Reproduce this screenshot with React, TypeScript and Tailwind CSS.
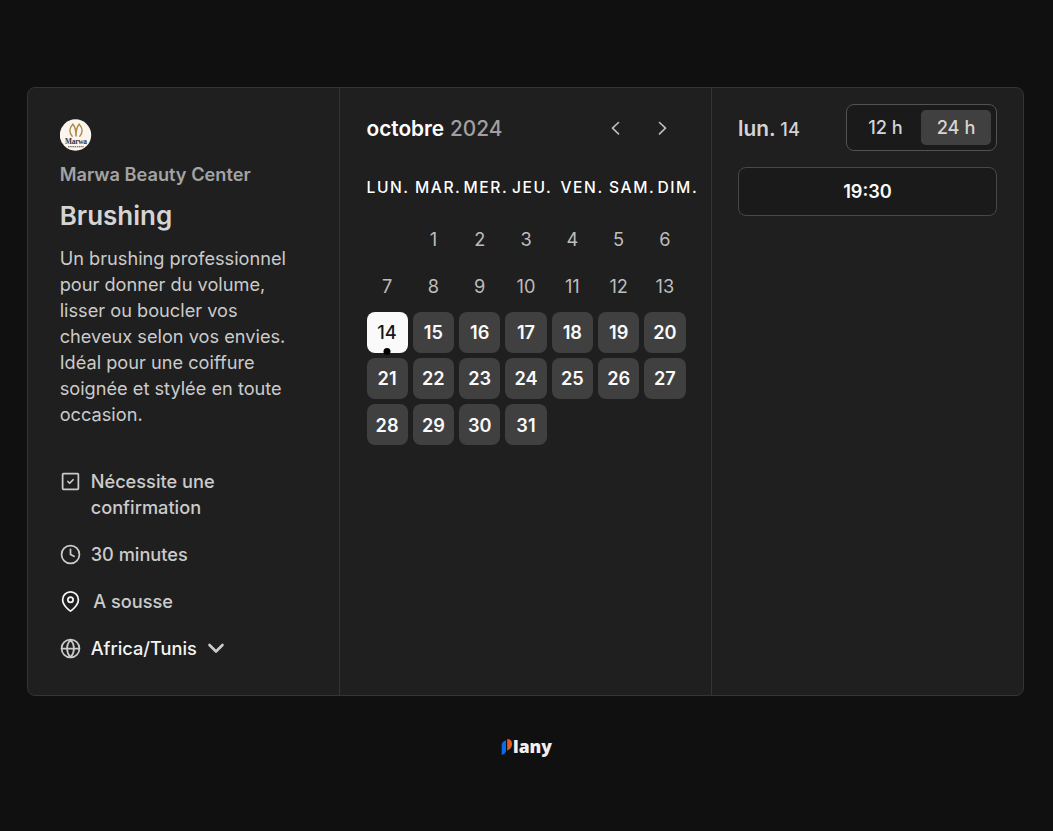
import React from "react";

const weekdays = ["LUN.", "MAR.", "MER.", "JEU.", "VEN.", "SAM.", "DIM."];
const days: (number | null)[] = [null, ...Array.from({ length: 31 }, (_, i) => i + 1)];

function Icon({ children, className = "" }: { children: React.ReactNode; className?: string }) {
  return (
    <svg
      viewBox="0 0 24 24"
      fill="none"
      stroke="currentColor"
      strokeWidth="2"
      strokeLinecap="round"
      strokeLinejoin="round"
      className={`mt-px size-[21px] shrink-0 ${className}`}
    >
      {children}
    </svg>
  );
}

function Avatar() {
  return (
    <svg viewBox="0 0 32 32" className="size-8">
      <circle cx="15.500" cy="16" r="15.700" fill="#fcf5ee" />
      <g fill="none" stroke="#ad8a50" strokeLinecap="round">
        <path d="M12.8 5.2C9.2 9 9 14 12.2 17.2" strokeWidth="1.4" />
        <path d="M19.2 5.2C22.8 9 23 14 19.8 17.2" strokeWidth="1.4" />
        <path d="M12.8 5.2C15 7.5 16.1 11 16 17M19.2 5.2C17 7.5 15.900 11 16 17" strokeWidth="1.5" />
      </g>
      <text x="16" y="25.2" textAnchor="middle" fontFamily="Liberation Serif, serif" fontWeight="700" fontSize="7.4" textLength="22" fill="#333">
        Marwa
      </text>
      <path d="M8 27.800h16" stroke="#4b4845" strokeWidth="1.1" strokeDasharray="1.500 .7" />
    </svg>
  );
}

function Details() {
  return (
    <section className="flex w-[312px] shrink-0 flex-col border-r border-[#343434] pl-[31.700px] pt-[31px] text-[#cbcbcb]">
      <Avatar />
      <p className="mt-[10.400px] text-[18.2px] font-semibold leading-[26px] text-[#a3a3a3]">Marwa Beauty Center</p>
      <h1 className="mt-[12px] text-[26px] font-semibold leading-[34px] text-[#d4d4d4]">Brushing</h1>
      <p className="mt-[12px] w-[240px] text-[18.2px] leading-[26px]">
        Un brushing professionnel pour donner du volume, lisser ou boucler vos cheveux selon vos envies. Idéal pour une coiffure soignée et stylée en toute occasion.
      </p>
      <ul className="mt-[40.600px] flex flex-col gap-[21px] text-[18.2px] font-medium leading-[26px]">
        <li className="flex w-[200px] gap-[10px]">
          <Icon className="translate-y-[2px]">
            <path d="M4 3h16a1 1 0 0 1 1 1v16a1 1 0 0 1-1 1H4a1 1 0 0 1-1-1V4a1 1 0 0 1 1-1Z" />
            <path d="m9 12 2 2 4-4" />
          </Icon>
          <span>Nécessite une confirmation</span>
        </li>
        <li className="flex items-center gap-[10px]">
          <Icon>
            <circle cx="12" cy="12" r="10.200" />
            <path d="M12 6v6l4 2" />
          </Icon>
          <span>30 minutes</span>
        </li>
        <li className="flex items-center gap-[12.500px]">
          <Icon className="text-[#f5f5f5]">
            <path d="M21 10c0 7-9 13-9 13s-9-6-9-13a9 9 0 0 1 18 0Z" />
            <circle cx="12" cy="10" r="3" />
          </Icon>
          <span>A sousse</span>
        </li>
        <li className="flex items-center gap-[10px]">
          <Icon>
            <circle cx="12" cy="12" r="10.200" />
            <path d="M2 12h20M12 2a15.300 15.300 0 0 1 4 10 15.300 15.300 0 0 1-4 10 15.300 15.300 0 0 1-4-10 15.300 15.300 0 0 1 4-10Z" />
          </Icon>
          <span className="text-[#f3f3f3]">Africa/Tunis</span>
          <svg viewBox="0 0 18 12" className="h-3 w-[18px]" fill="none" stroke="currentColor" strokeWidth="2.600" strokeLinecap="round" strokeLinejoin="round">
            <path d="m2.500 3 6.500 6.500L15.500 3" />
          </svg>
        </li>
      </ul>
    </section>
  );
}

function dayStyle(day: number | null) {
  if (day === null) return "";
  if (day < 14) return "text-[#bdbdbd]";
  if (day === 14) return "bg-[#fafafa] font-medium text-[#171717]";
  return "bg-[#404040] font-semibold text-[#fafafa]";
}

function Calendar() {
  return (
    <section className="w-[372px] shrink-0 border-r border-[#343434] pl-[26.500px] pt-[26.500px]">
      <header className="flex h-[28px] items-center justify-between pr-[43.500px] text-[20.8px] leading-[28px]">
        <h2 className="text-[#a0a0a0]">
          <span className="font-semibold text-white">octobre</span> <span className="font-medium">2024</span>
        </h2>
        <div className="flex gap-[34px] pb-px text-[#bdbdbd]">
          {["M8.500 1.500 2.500 7.200l6 5.700", "m3.500 1.500 6 5.700-6 5.700"].map((path, i) => (
            <button key={path} aria-label={i === 0 ? "Mois précédent" : "Mois suivant"}>
              <svg viewBox="0 0 12 14" className="h-[14px] w-[12px]" fill="none" stroke="currentColor" strokeWidth="1.600" strokeLinecap="round" strokeLinejoin="round">
                <path d={path} />
              </svg>
            </button>
          ))}
        </div>
      </header>
      <div className="mt-[35.500px] flex text-[15.6px] font-medium leading-[20px] tracking-[1.56px] text-white">
        {weekdays.map((w) => (
          <div key={w} className="w-[48.500px] shrink-0">{w}</div>
        ))}
      </div>
      <div className="mt-[20.800px] grid w-[319px] grid-cols-7 gap-[5.200px] text-[18.2px]">
        {days.map((day, i) => (
          <div key={i} className={`relative flex h-[41.200px] items-center justify-center rounded-[8px] pt-px ${dayStyle(day)}`}>
            {day}
            {day === 14 && <span className="absolute -bottom-[2px] left-1/2 size-[7px] -translate-x-1/2 rounded-full bg-black" />}
          </div>
        ))}
      </div>
    </section>
  );
}

function Slots() {
  return (
    <section className="grow px-[26px] pt-[16px]">
      <header className="flex items-center justify-between text-[#d4d4d4]">
        <h2 className="pt-[2px] text-[20.8px] font-semibold">
          lun. <span className="text-[18.2px] font-medium">14</span>
        </h2>
        <div className="flex h-[47px] w-[151px] items-center rounded-[8px] border border-[#525252] bg-[#1a1a1a] px-[5px] text-[18.2px] font-medium">
          <button className="h-[35px] w-[69px] pr-[2px] pt-px">12 h</button>
          <button className="h-[35px] w-[70px] rounded-[5px] bg-[#404040] pt-px">24 h</button>
        </div>
      </header>
      <button className="mt-[16px] h-[49px] w-full rounded-[8px] border border-[#484848] bg-[#1a1a1a] text-[18.2px] font-semibold text-[#fafafa]">19:30</button>
    </section>
  );
}

function Brand() {
  return (
    <footer className="mt-[40px] flex h-[19px] items-center justify-center">
      <svg viewBox="0 0 12 18" className="mt-[3px] h-[18px] w-[12px]">
        <path d="M5 2.500v11Q4 16.500 .700 17V7Q1 3.200 5 2.500Z" fill="#086be8" />
        <path d="M6.200 1Q11 1.300 11 6.200 11 10.500 6.200 12.500Z" fill="#e45c22" />
      </svg>
      <span className="font-['Open_Sans',sans-serif] text-[17.500px] font-extrabold leading-[18px] text-[#f5eeee]">lany</span>
    </footer>
  );
}

export default function App() {
  return (
    <div className="h-[831px] w-full bg-[#101010] pl-[27px] pt-[87px] font-['Inter',sans-serif]">
      <main className="flex h-[609px] w-[997px] rounded-[8px] border border-[#343434] bg-[#1f1f1f]">
        <Details />
        <Calendar />
        <Slots />
      </main>
      <div className="-ml-[27px]">
        <Brand />
      </div>
    </div>
  );
}
